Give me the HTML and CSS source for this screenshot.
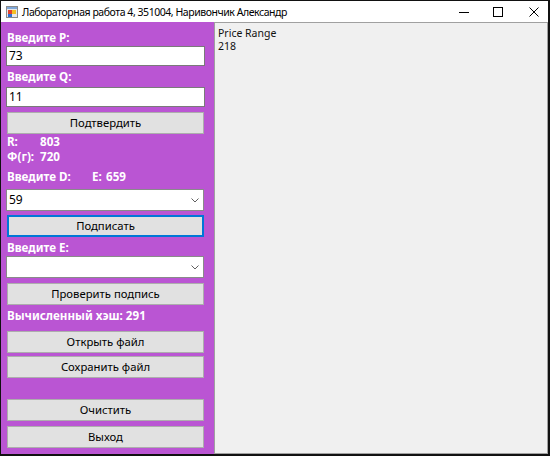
FILE: index.html
```html
<!DOCTYPE html>
<html lang="ru">
<head>
<meta charset="utf-8">
<title>Лабораторная работа 4</title>
<link rel="stylesheet" href="styles.css">
</head>
<body>
<div class="window">
  <div class="titlebar">
    <svg class="app-icon" width="12" height="12" viewBox="0 0 12 12">
      <rect x="0.5" y="0.5" width="11" height="11" fill="#e8e8e8" stroke="#8a8a8a"/>
      <rect x="1" y="1" width="10" height="2" fill="#7fa7d8"/>
      <rect x="2" y="4" width="4" height="4" fill="#e2412f"/>
      <rect x="6" y="4" width="4" height="4" fill="#f5c023"/>
      <rect x="2" y="8" width="4" height="3" fill="#2f6fd1"/>
    </svg>
    <span class="title">Лабораторная работа 4, 351004, Наривончик Александр</span>
    <svg class="ctl ctl-min" width="10" height="10" viewBox="0 0 10 10"><line x1="0" y1="5.5" x2="10" y2="5.5" stroke="#000" stroke-width="1"/></svg>
    <svg class="ctl ctl-max" width="10" height="10" viewBox="0 0 10 10"><rect x="0.5" y="0.5" width="9" height="9" fill="none" stroke="#000" stroke-width="1"/></svg>
    <svg class="ctl ctl-close" width="10" height="10" viewBox="0 0 10 10"><path d="M0.5 0.5 L9.5 9.5 M9.5 0.5 L0.5 9.5" stroke="#000" stroke-width="1"/></svg>
  </div>
  <div class="client">
    <div class="side">
      <div class="lbl l-p">Введите P:</div>
      <div class="tb tb-1">73</div>
      <div class="lbl l-q">Введите Q:</div>
      <div class="tb tb-2">11</div>
      <div class="btn b-confirm">Подтвердить</div>
      <div class="lbl row l-r"><span class="k">R:</span><span>803</span></div>
      <div class="lbl row l-f"><span class="k">Ф(г):</span><span>720</span></div>
      <div class="lbl row l-d"><span class="kd">Введите D:</span><span class="ke">E:</span><span>659</span></div>
      <div class="combo c-1"><span>59</span><svg class="chev" width="8" height="5" viewBox="0 0 8 5"><path d="M0.5 0.5 L4 4 L7.5 0.5" fill="none" stroke="#606060" stroke-width="1"/></svg></div>
      <div class="btn focus b-sign">Подписать</div>
      <div class="lbl l-e">Введите E:</div>
      <div class="combo c-2"><span></span><svg class="chev" width="8" height="5" viewBox="0 0 8 5"><path d="M0.5 0.5 L4 4 L7.5 0.5" fill="none" stroke="#606060" stroke-width="1"/></svg></div>
      <div class="btn b-verify">Проверить подпись</div>
      <div class="lbl l-hash">Вычисленный хэш: 291</div>
      <div class="btn b-open">Открыть файл</div>
      <div class="btn b-save">Сохранить файл</div>
      <div class="btn b-clear">Очистить</div>
      <div class="btn b-exit">Выход</div>
    </div>
    <div class="main">
      <div class="main-text">Price Range</div>
      <div class="main-text">218</div>
    </div>
  </div>
</div>
</body>
</html>
```

FILE: styles.css
```css
html, body {
  margin: 0;
  padding: 0;
  background: #000;
}
.window {
  width: 550px;
  height: 456px;
  box-sizing: border-box;
  border-style: solid;
  border-color: #111;
  border-width: 1px 2px 2px 1px;
  display: flex;
  flex-direction: column;
  background: #fff;
  font-family: "Noto Sans", "Open Sans", sans-serif;
}
.titlebar {
  height: 21px;
  flex: none;
  display: flex;
  align-items: center;
  background: #fff;
}
.app-icon {
  margin-left: 5px;
  margin-top: 1px;
}
.title {
  margin-left: 4px;
  font-size: 10.5px;
  letter-spacing: -0.45px;
  color: #000;
  white-space: nowrap;
}
.ctl { flex: none; }
.ctl-min { margin-left: auto; }
.ctl-max { margin-left: 24px; }
.ctl-close { margin-left: 26px; margin-right: 9px; }

.client {
  flex: 1;
  display: flex;
  min-height: 0;
}
.side {
  width: 213px;
  flex: none;
  background: #BA55D3;
  display: flex;
  flex-direction: column;
  align-items: flex-start;
  padding-top: 8px;
  box-sizing: border-box;
}
.main {
  flex: 1;
  background: #f0f0f0;
  border: 1px solid #a0a0a0;
  padding: 4px 3px;
}
.main-text {
  font-size: 10.5px;
  line-height: 13px;
  color: #111;
}

.lbl {
  color: #fff;
  font-weight: 700;
  font-size: 11.6px;
  line-height: 16px;
  height: 16px;
  margin-left: 6px;
  white-space: nowrap;
}
.row { display: flex; }
.k { width: 33px; }
.kd { width: 85px; }
.ke { width: 14px; }

.tb, .combo {
  margin-left: 5px;
  width: 199px;
  height: 20px;
  box-sizing: border-box;
  background: #fff;
  border: 1px solid #7a7a7a;
  font-size: 12px;
  line-height: 18px;
  padding-left: 2px;
  color: #000;
}
.combo {
  width: 198px;
  height: 22px;
  line-height: 20px;
  display: flex;
  align-items: center;
  justify-content: space-between;
  padding-right: 4px;
  border-color: #8a8a8a;
}
.chev { flex: none; margin-top: 1px; }

.btn {
  margin-left: 6px;
  width: 197px;
  height: 22px;
  box-sizing: border-box;
  background: #e1e1e1;
  border: 1px solid #adadad;
  font-size: 11.3px;
  line-height: 20px;
  text-align: center;
  color: #000;
}
.btn.focus {
  border-color: #0078d7;
  box-shadow: inset 0 0 0 1px #0078d7;
}

.tb-1 { margin-top: 0; }
.l-q { margin-top: 3px; }
.tb-2 { margin-top: 2px; }
.b-confirm { margin-top: 5px; }
.l-r { margin-top: 0; height: 15px; line-height: 15px; }
.l-f { margin-top: 0; }
.l-d { margin-top: 4px; }
.c-1 { margin-top: 4px; }
.b-sign { margin-top: 4px; }
.l-e { margin-top: 3px; }
.c-2 { margin-top: 0; }
.b-verify { margin-top: 5px; }
.l-hash { margin-top: 3px; }
.b-open { margin-top: 7px; }
.b-save { margin-top: 3px; }
.b-clear { margin-top: 21px; }
.b-exit { margin-top: 5px; }
```
